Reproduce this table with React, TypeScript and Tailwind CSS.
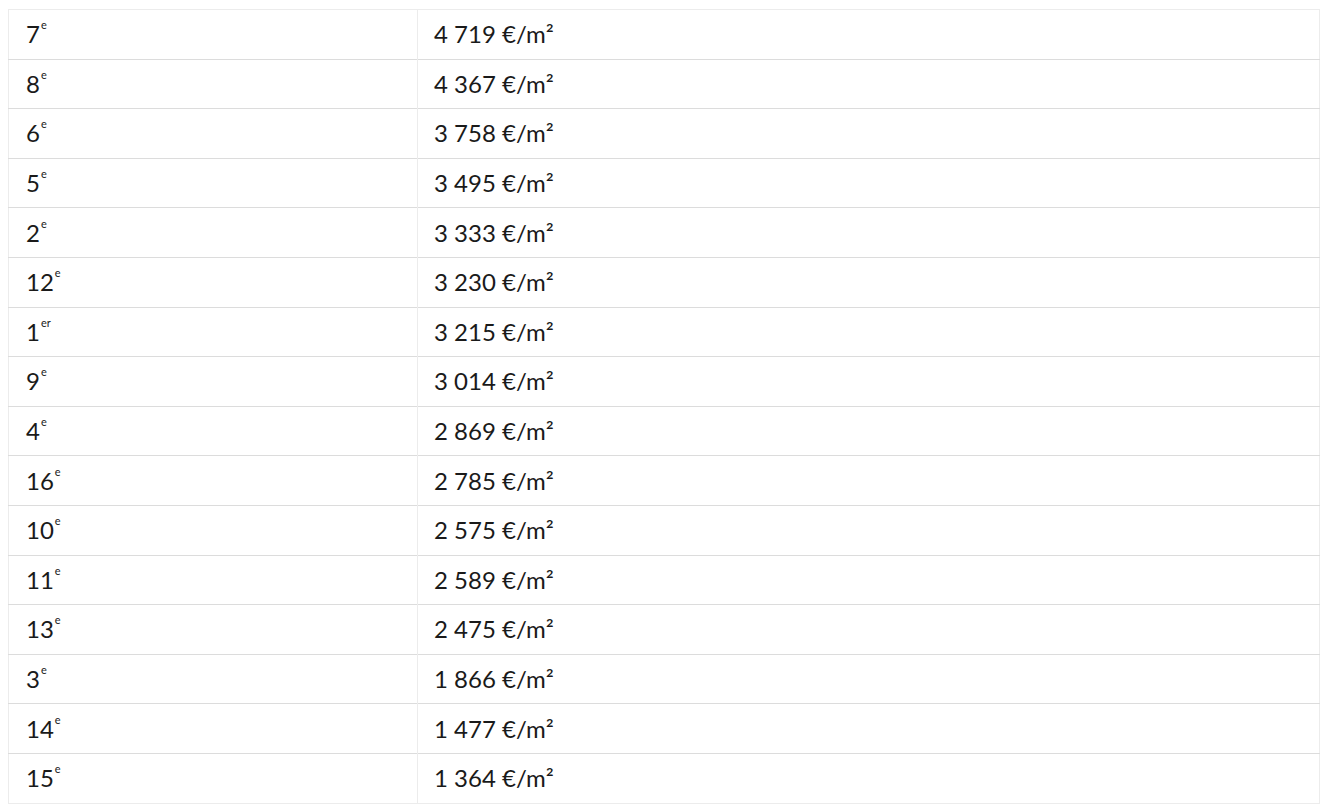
const rows: [string, string, string][] = [
  ["7", "e", "4 719 €/m²"],
  ["8", "e", "4 367 €/m²"],
  ["6", "e", "3 758 €/m²"],
  ["5", "e", "3 495 €/m²"],
  ["2", "e", "3 333 €/m²"],
  ["12", "e", "3 230 €/m²"],
  ["1", "er", "3 215 €/m²"],
  ["9", "e", "3 014 €/m²"],
  ["4", "e", "2 869 €/m²"],
  ["16", "e", "2 785 €/m²"],
  ["10", "e", "2 575 €/m²"],
  ["11", "e", "2 589 €/m²"],
  ["13", "e", "2 475 €/m²"],
  ["3", "e", "1 866 €/m²"],
  ["14", "e", "1 477 €/m²"],
  ["15", "e", "1 364 €/m²"],
];

export default function App() {
  return (
    <div className="min-h-screen bg-white pl-2 pr-[10px] pt-[9px] font-['Lato','Open_Sans',sans-serif] text-[#1a1a1a]">
      <table className="w-full border-collapse border border-[#ececec] text-[24px]">
        <tbody>
          {rows.map(([num, suf, price]) => (
            <tr key={num} className="h-[49.6px] border-b border-[#dcdcdc] last:border-b-[#ececec]">
              <td className="w-[409px] border-r border-[#ececec] pl-[17px] align-middle leading-none">
                {num}
                <sup className="relative -top-[14px] ml-[1px] text-[11px]">{suf}</sup>
              </td>
              <td className="pl-4 align-middle leading-none">{price}</td>
            </tr>
          ))}
        </tbody>
      </table>
    </div>
  );
}
